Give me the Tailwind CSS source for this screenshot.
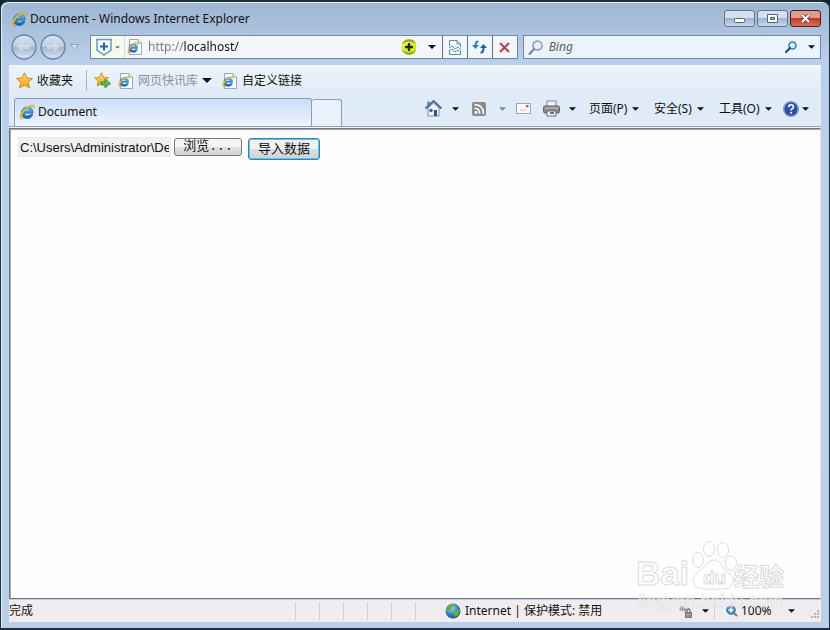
<!DOCTYPE html>
<html lang="zh-CN">
<head>
<meta charset="utf-8">
<title>Document - Windows Internet Explorer</title>
<script src="https://cdn.jsdelivr.net/npm/@tailwindcss/browser@4"></script>
</head>
<body class="h-screen overflow-hidden bg-[#10242e] font-['Noto_Sans','Noto_Sans_CJK_SC',sans-serif] text-[12px] leading-4 text-[#111]">
<svg class="absolute size-0" aria-hidden="true">
  <defs>
    <linearGradient id="blue" x1="0" y1="0" x2="0" y2="1"><stop offset="0" stop-color="#5cc4f0"/><stop offset="1" stop-color="#1260ae"/></linearGradient>
    <linearGradient id="gold" x1="0" y1="0" x2="0" y2="1"><stop offset="0" stop-color="#ffe27a"/><stop offset="1" stop-color="#f5a010"/></linearGradient>
    <radialGradient id="globe" cx=".4" cy=".3" r=".8"><stop offset="0" stop-color="#a5d8f5"/><stop offset=".5" stop-color="#3b86c4"/><stop offset="1" stop-color="#12406f"/></radialGradient>
    <radialGradient id="lime" cx=".4" cy=".35" r=".7"><stop offset="0" stop-color="#f4ff5a"/><stop offset="1" stop-color="#cfe000"/></radialGradient>
    <linearGradient id="orb" x1="0" y1="0" x2="0" y2="1"><stop offset="0" stop-color="#dbe6f3"/><stop offset=".48" stop-color="#bccbdf"/><stop offset=".52" stop-color="#a3b5cf"/><stop offset="1" stop-color="#d9e6f4"/></linearGradient>
    <symbol id="ie" viewBox="0 0 16 16">
      <path d="M14.200 9.300H5.600c.2 1.700 1.300 2.500 2.900 2.500 1.200 0 2-.4 2.500-1.200h2.900c-.8 2.500-2.700 4-5.500 4-3.600 0-6-2.300-6-5.800 0-3.500 2.400-5.900 6-5.900 3.800 0 6 2.500 5.800 6.400zM11 7.200C10.800 5.900 9.900 5.200 8.400 5.200S5.900 5.900 5.600 7.200z" fill="url(#blue)" stroke="#12549b" stroke-width=".5"/>
      <path d="M2.400 15.200C.2 14.900.4 11.500 3.300 7.600 6.800 2.800 12.400-.1 14.600 1.200c1 .8.800 2.300 0 3.800.2-1.300.1-2.200-.9-2.500C11.600 2.200 7.400 4.700 4.600 8.700c-2.100 3-2.900 5.500-1.600 5.700.6.100 1.300-.1 2.100-.5-1 .8-2 1.300-2.700 1.300z" fill="#f2c230" stroke="#b5841c" stroke-width=".3"/>
    </symbol>
    <symbol id="iepage" viewBox="0 0 16 16">
      <path d="M2.500.5h8.500l3.500 3.500v11.500h-12z" fill="#fff" stroke="#a0a6ad"/>
      <path d="M11 .5v3.500h3.500" fill="#e8ebef" stroke="#a0a6ad"/>
      <svg x="0" y="2.500" width="12" height="12" viewBox="0 0 16 16"><use href="#ie"/></svg>
    </symbol>
    <symbol id="star" viewBox="0 0 16 16"><path d="M8 .8l2.200 4.800 5.200.6-3.900 3.500 1.100 5.200L8 12.300l-4.600 2.600 1.100-5.200L.6 6.200l5.200-.6z" fill="url(#gold)" stroke="#cf8412" stroke-width=".9" stroke-linejoin="round"/></symbol>
    <symbol id="caret" viewBox="0 0 8 4"><path d="M0 0h8L4 4z" fill="currentColor"/></symbol>
  </defs>
</svg>

<div class="relative flex h-full flex-col rounded-t-lg border-b-2 border-r border-t-2 border-l border-[#1c2f3a] bg-[#b9cfea] bg-gradient-to-b from-[#9fb6d2] via-[#b9cfea] via-[60px] to-[#b9d0ea] px-2 pb-1.5 shadow-[inset_1px_1px_0_#e6effa]">

  <header class="flex h-[33px] shrink-0 items-center pl-0.5">
    <svg class="mr-[3px] size-4"><use href="#ie"/></svg>
    <h1 class="grow whitespace-nowrap">Document - Windows Internet Explorer</h1>
    <div class="flex gap-0.5">
      <button aria-label="最小化" class="flex h-[17px] w-[31px] items-center justify-center rounded-[3px] border border-[#64748f] bg-gradient-to-b from-[#d3e0ef] from-50% via-[#9fb4cf] via-50% to-[#c6d9ee]"><svg class="mt-1 h-[5px] w-[11px]" viewBox="0 0 11 5"><rect x=".5" y=".5" width="10" height="4" rx="1" fill="#fff" stroke="#59616e"/></svg></button>
      <button aria-label="还原" class="flex h-[17px] w-[31px] items-center justify-center rounded-[3px] border border-[#64748f] bg-gradient-to-b from-[#d3e0ef] from-50% via-[#9fb4cf] via-50% to-[#c6d9ee]"><svg class="h-[9px] w-[11px]" viewBox="0 0 11 9"><path d="M.5.5h10v8H.5z" fill="#fff" stroke="#59616e"/><path d="M3.500 3.500h4v2h-4z" fill="#9eb2cb" stroke="#59616e"/></svg></button>
      <button aria-label="关闭" class="flex h-[17px] w-[31px] items-center justify-center rounded-[3px] border border-[#5a1a1c] bg-gradient-to-b from-[#dd9c90] from-50% via-[#c03a2b] via-50% to-[#d4705c]"><svg class="h-[9px] w-[11px]" viewBox="0 0 11 9"><path d="M2 1l7 7M9 1L2 8" stroke="#673236" stroke-width="3.600"/><path d="M2 1l7 7M9 1L2 8" stroke="#fff" stroke-width="2.200"/></svg></button>
    </div>
  </header>

  <div class="flex h-6 shrink-0 items-center pl-0.5">
    <button aria-label="后退" class="size-[26px]"><svg viewBox="0 0 26 26"><circle cx="13" cy="13" r="12" fill="url(#orb)" stroke="#6d819f" stroke-width="1.300"/><path d="M12 7l-6 6 6 6v-4h7v-4h-7z" fill="#e3ebf5" opacity=".5"/></svg></button>
    <button aria-label="前进" class="ml-[3px] size-[26px]"><svg viewBox="0 0 26 26"><circle cx="13" cy="13" r="12" fill="url(#orb)" stroke="#6d819f" stroke-width="1.300"/><path d="M14 7l6 6-6 6v-4H7v-4h7z" fill="#e3ebf5" opacity=".5"/></svg></button>
    <button aria-label="最近浏览的页面" class="flex w-6 pl-1"><svg class="h-[6px] w-[9px]" viewBox="0 0 9 6"><path d="M.5.5h8l-4 4.500z" fill="#d8e4f2" stroke="#8fa4c2"/></svg></button>
    <div class="flex h-6 flex-[428] items-stretch border border-[#7288a6] bg-[#f3f7fc]">
      <button aria-label="安全状态" class="flex w-[34px] items-center justify-center gap-[3px] border-r border-[#d4dccf] bg-[#f4fbea] text-[#666]">
        <svg class="h-[18px] w-4" viewBox="0 0 16 18"><path d="M1 1.500h14v10.500l-7 5-7-5z" fill="#fff" stroke="#6697cf" stroke-width="1.500"/><path d="M8 4.500v8M4 8.500h8" stroke="#20639f" stroke-width="2"/></svg>
        <svg class="h-[3px] w-[5px]" viewBox="0 0 8 4"><use href="#caret"/></svg>
      </button>
      <label class="flex grow items-center"><svg class="ml-0.5 mr-[5px] size-4 shrink-0"><use href="#iepage"/></svg>
        <input aria-label="地址" class="w-0 grow bg-linear-to-r from-[#7b7b7b] from-[36px] via-[#111] via-[36px] to-[#111] bg-clip-text text-transparent caret-black outline-none" value="http://localhost/">
      </label>
      <button aria-label="添加" class="flex w-6 items-center justify-center"><svg class="ml-1 size-4" viewBox="0 0 16 16"><circle cx="8" cy="8" r="7.500" fill="url(#lime)"/><path d="M1 5A7.500 7.500 0 0 1 15 5Q8 0 1 5zM1 11a7.500 7.500 0 0 0 14 0Q8 16 1 11z" fill="#8aad16"/><path d="M8 4v8M4 8h8" stroke="#16340c" stroke-width="2.400"/></svg></button>
      <button aria-label="显示地址" class="flex w-[23px] items-center justify-center pl-1"><svg class="h-1 w-2"><use href="#caret"/></svg></button>
      <button aria-label="兼容性视图" class="flex w-[25px] items-center justify-center border-l border-[#5e7390]"><svg class="h-[15px] w-3" viewBox="0 0 12 15"><path d="M.5 6V.5H8L11.500 4v3M8 .5V4h3.500M.5 10v4.500h11V11" fill="none" stroke="#5390ab"/><path d="M0 8l3-2 3 3 3-2 3 3M0 11l3-2 3 3 3-2 3 3" fill="none" stroke="#4d9ca8"/></svg></button>
      <button aria-label="刷新" class="flex w-[25px] items-center justify-center border-l border-[#5e7390]"><svg class="h-[14px] w-[15px]" viewBox="0 0 15 14"><path d="M6.500 1.500Q3.500 1 3.500 6" fill="none" stroke="#2f86b8" stroke-width="2"/><path d="M0 5h7L3.500 9z" fill="#2f86b8"/><path d="M8.500 12.500Q11.500 13 11.500 8" fill="none" stroke="#265c9b" stroke-width="2"/><path d="M8 8h7l-3.500-4z" fill="#265c9b"/></svg></button>
      <button aria-label="停止" class="flex w-[25px] items-center justify-center border-l border-[#5e7390]"><svg class="h-[11px] w-[11px]" viewBox="0 0 11 11"><path d="M1 1l9 9M10 1l-9 9" stroke="#b3474d" stroke-width="2.200"/></svg></button>
    </div>
    <form class="ml-[5px] flex h-6 flex-[298] items-center border border-[#7288a6] bg-[#ebf3fc]">
      <svg class="ml-1 size-[15px]" viewBox="0 0 15 15"><circle cx="9.500" cy="5.500" r="4.500" fill="#e4effb" stroke="#8297b8" stroke-width="1.500"/><path d="M6 9l-4.500 5" stroke="#7c8490" stroke-width="2.200" stroke-linecap="round"/></svg>
      <input aria-label="搜索" placeholder="Bing" class="ml-1.5 w-0 grow bg-transparent italic outline-none placeholder:text-[#5c6066]">
      <button type="button" aria-label="搜索" class="flex w-6 justify-center"><svg class="size-3" viewBox="0 0 12 12"><circle cx="7.500" cy="4.500" r="3.500" fill="#dff1fb" stroke="#3384b4" stroke-width="1.600"/><path d="M5 7l-4 4" stroke="#26527e" stroke-width="2.200" stroke-linecap="round"/></svg></button>
      <button type="button" aria-label="搜索选项" class="flex w-[17px] justify-center"><svg class="h-1 w-[7px]"><use href="#caret"/></svg></button>
    </form>
  </div>

  <div class="mt-1.5 flex min-h-0 grow flex-col">
    <nav aria-label="收藏夹栏" class="flex h-[31px] shrink-0 items-center bg-gradient-to-b from-[#eef4fc] to-[#dfeaf7] pl-[7px]">
      <button class="flex w-[70px] items-center gap-1 whitespace-nowrap"><svg class="size-[17px]"><use href="#star"/></svg>收藏夹</button>
      <span class="mr-[7px] h-[21px] w-px bg-[#a9b6c8]"></span>
      <button aria-label="添加到收藏夹栏" class="mr-[7px]"><svg class="size-[17px]" viewBox="0 0 17 17"><use href="#star" width="15" height="15"/><path d="M7 10h4V7l5.500 4.500L11 16v-3H7z" fill="#57c04d" stroke="#288532" stroke-width=".8"/></svg></button>
      <button class="flex items-center gap-1 whitespace-nowrap text-[#8b9096]"><svg class="size-4"><use href="#iepage"/></svg>网页快讯库<svg class="h-[5px] w-[10px] text-[#111]"><use href="#caret"/></svg></button>
      <a href="#" class="ml-[10px] flex items-center gap-1 whitespace-nowrap"><svg class="size-4"><use href="#iepage"/></svg>自定义链接</a>
    </nav>

    <div class="flex h-[31px] shrink-0 items-end border-b border-[#98a0ad] bg-[#e0ebf8] pl-[5px]">
      <div role="tablist" class="flex h-[28px] w-[328px] shrink-0 items-end">
        <button role="tab" aria-selected="true" class="flex h-[28px] grow items-center gap-[3px] rounded-t-[3px] border border-b-0 border-[#8e9cb1] bg-gradient-to-b from-[#c9ddf9] to-[#edf4fe] pb-0.5 pl-1"><svg class="size-4"><use href="#ie"/></svg>Document</button>
        <button role="tab" aria-label="新选项卡" class="h-[27px] w-[30px] rounded-t-[3px] border border-b-0 border-l-0 border-[#8e9cb1] bg-[#e9f1fb]"></button>
      </div>
      <div class="flex h-[31px] grow items-center justify-end whitespace-nowrap pb-1 pr-3">
        <button aria-label="主页" class="w-[27px]"><svg class="size-[17px]" viewBox="0 0 17 17"><path d="M3 8v8h11V8L8.500 3z" fill="#edf3fa" stroke="#7c90ab"/><path d="M2.500 1.500h2v4l-2 2z" fill="#5f7396"/><path d="M.5 8.500l8-7.500 8 7.500" fill="none" stroke="#4a71aa" stroke-width="2"/><path d="M9 10h3v6H9z" fill="#36508a"/><path d="M4.500 9h3v3h-3z" fill="#425e92"/></svg></button>
        <button aria-label="主页选项" class="flex w-5"><svg class="h-1 w-[7px]"><use href="#caret"/></svg></button>
        <button aria-label="源" class="w-[27px]"><svg class="size-[14px]" viewBox="0 0 14 14"><rect width="14" height="14" rx="2" fill="#8b8d90"/><circle cx="4" cy="10.500" r="1.400" fill="#fff"/><path d="M2.500 6.300q5.200 0 5.200 5.500M2.500 2.700q9 0 9 9.200" fill="none" stroke="#fff" stroke-width="1.500"/></svg></button>
        <button aria-label="源选项" class="flex w-[17px] text-[#7c858f]"><svg class="h-1 w-[7px]"><use href="#caret"/></svg></button>
        <button aria-label="阅读邮件" class="w-[27px]"><svg class="h-[11px] w-[15px]" viewBox="0 0 15 11"><rect x=".5" y=".5" width="14" height="10" fill="#fafafa" stroke="#a5a7aa"/><path d="M10 2h2.500v2.500H10z" fill="#c55a58"/><path d="M4 7h6" stroke="#c8c8c8"/></svg></button>
        <button aria-label="打印" class="w-[26px]"><svg class="size-[17px]" viewBox="0 0 17 17"><path d="M4 1h9v6H4z" fill="#f3f3f3" stroke="#888"/><rect x=".5" y="6" width="16" height="7" rx="1.500" fill="#898d92" stroke="#5a5e63"/><path d="M2 8h13" stroke="#c6cacc"/><path d="M4 11h9v5H4z" fill="#fff" stroke="#666"/><path d="M7 12h4v2H7z" fill="#4477a8"/></svg></button>
        <button aria-label="打印选项" class="flex w-5"><svg class="h-1 w-[7px]"><use href="#caret"/></svg></button>
        <button class="flex w-[65px] items-center gap-[5px]">页面(P)<svg class="h-1 w-[7px]"><use href="#caret"/></svg></button>
        <button class="flex w-[65px] items-center gap-[5px]">安全(S)<svg class="h-1 w-[7px]"><use href="#caret"/></svg></button>
        <button class="flex w-[64px] items-center gap-[5px]">工具(O)<svg class="h-1 w-[7px]"><use href="#caret"/></svg></button>
        <button aria-label="帮助" class="flex items-center gap-[3px]"><svg class="size-4" viewBox="0 0 16 16"><circle cx="8" cy="8" r="7.300" fill="#2f4fa5" stroke="#8b9cc8" stroke-width="1.400"/><path d="M5.700 6.300q0-2.500 2.400-2.500t2.400 2.200q0 1.200-1.300 1.800-1.100.6-1.100 1.700" fill="none" stroke="#fff" stroke-width="1.600"/><circle cx="8.100" cy="11.800" r="1" fill="#fff"/></svg><svg class="h-1 w-[7px]"><use href="#caret"/></svg></button>
      </div>
    </div>

    <div class="flex min-h-0 grow flex-col bg-[#f0f3f8] pt-px">
      <main class="grow border-y border-l border-r border-[#75757d] border-r-[#e4e4e8] bg-[#fffeff] p-2 shadow-[inset_1px_1px_0_#a6a6ac]">
        <form class="flex items-start text-[13px] leading-[18px]">
          <input aria-label="文件" readonly value="C:\Users\Administrator\Desktop\" class="mr-[3px] h-5 w-[153px] border border-[#ebe9ea] bg-[#f1eff0] px-px font-['Liberation_Sans',sans-serif] text-[#111] outline-none">
          <button type="button" class="mr-1.5 mt-px flex h-[18px] w-[68px] items-center justify-center rounded-[3px] border border-[#777] bg-gradient-to-b from-[#f4f4f4] from-50% via-[#e3e3e3] via-50% to-[#d2d2d2] font-['Liberation_Mono','Noto_Sans_CJK_SC',monospace]">浏览...</button>
          <button type="button" class="mt-px flex h-[22px] w-[72px] items-center justify-center rounded-[3px] border border-[#3c7fb1] bg-gradient-to-b from-[#f2f2f2] from-50% via-[#dcdfe1] via-50% to-[#cfd3d5] pb-[3px] font-['Noto_Sans_CJK_SC',sans-serif] shadow-[inset_0_0_0_1px_#5cc6e8]">导入数据</button>
        </form>
      </main>
    </div>

    <footer class="mt-px flex h-[22px] shrink-0 items-center bg-[#f1eced] whitespace-nowrap">
      <span class="grow">完成</span>
      <div class="flex h-[18px] divide-x divide-[#d6d0d2] border-l border-[#d6d0d2]"><i class="w-6"></i><i class="w-6"></i><i class="w-6"></i><i class="w-6"></i><i class="w-6"></i><i class="w-6"></i></div>
      <div class="flex w-[229px] items-center gap-1 pl-[5px]">
        <svg class="size-4" viewBox="0 0 16 16"><circle cx="8" cy="8" r="7.500" fill="url(#globe)"/><path d="M2 4q3-4 7-3l1 2-3 1-1 3-3 1-2-1zM9 7l4-1 2 2-2 4-3 2-1-3z" fill="#5fb150"/></svg>
        Internet | 保护模式: 禁用
      </div>
      <button aria-label="隐私" class="flex w-[45px] items-center gap-[9px] pl-[9px]"><svg class="size-[15px]" viewBox="0 0 15 15"><path d="M1 6q2-5 6-4l-1 2 4 1-3 4-1-2q-3 0-5-1z" fill="#a7a7a7"/><path d="M9 8V6q2-2 3 0v2" fill="none" stroke="#777" stroke-width="1.300"/><rect x="7" y="8" width="7" height="6" fill="#777"/><path d="M8 10h5M8 12h5" stroke="#bbb"/></svg><svg class="h-1 w-[7px]"><use href="#caret"/></svg></button>
      <button class="flex w-[96px] items-center border-l border-[#d6d0d2] pl-[11px] pr-[15px]"><svg class="mr-[3px] size-3 shrink-0" viewBox="0 0 12 12"><path d="M8 8l3 3" stroke="#8a7a68" stroke-width="2"/><circle cx="5" cy="5" r="4.300" fill="#4b93cc" stroke="#2d6ca4"/><path d="M5 2.500v5M2.500 5h5" stroke="#fff" stroke-width="1.400"/></svg><span class="grow text-left">100%</span><svg class="h-1 w-[7px] shrink-0"><use href="#caret"/></svg></button>
      <svg class="h-[22px] w-[11px]" viewBox="0 0 11 22"><path d="M7 11h2M4 14h2M7 14h2M1 17h2M4 17h2M7 17h2" stroke="#b9b2b4" stroke-width="2"/></svg>
    </footer>
  </div>

  <div aria-hidden="true" class="pointer-events-none absolute bottom-3 right-9 h-[78px] w-[156px]">
    <svg class="size-full" viewBox="0 0 156 78" fill="#fff" fill-opacity=".6" stroke="#dcdadd">
      <text x="-1" y="47" font-family="Liberation Sans, sans-serif" font-weight="bold" font-size="34">Bai</text>
      <ellipse cx="61" cy="22" rx="5.500" ry="7.500"/><ellipse cx="72" cy="11" rx="5.500" ry="7.500"/><ellipse cx="86" cy="12" rx="5.500" ry="7.500"/><ellipse cx="94" cy="25" rx="5.500" ry="7.500"/>
      <path d="M77 22c-6 0-8 6-13 10-5 4-9 7-7 13 2 7 10 6 20 6s17 1 19-6c2-6-3-9-8-13-4-5-5-10-11-10z"/>
      <text x="66" y="46" font-family="Liberation Sans, sans-serif" font-weight="bold" font-size="19">du</text>
      <text x="97" y="48" font-family="Noto Sans CJK SC, sans-serif" font-weight="bold" font-size="25">经验</text>
      <text x="1" y="69" font-family="Liberation Sans, sans-serif" font-size="18" stroke-width=".5">jingyan.baidu.com</text>
    </svg>
  </div>
</div>
</body>
</html>
